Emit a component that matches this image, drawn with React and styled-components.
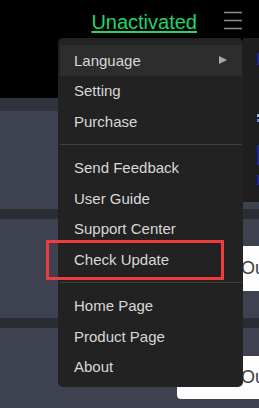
import React from "react";
import styled, { createGlobalStyle } from "styled-components";

const Global = createGlobalStyle`
  html, body { margin: 0; padding: 0; background: #000; }
  body { font-family: "Liberation Sans", Arial, sans-serif; }
  * { box-sizing: border-box; }
`;

const Page = styled.div`
  position: relative;
  width: 259px;
  height: 408px;
  overflow: hidden;
  display: flex;
  flex-direction: column;
  background: #2a2c33;
`;

const Header = styled.header`
  height: 98px;
  flex: none;
  background: #000;
  display: flex;
  justify-content: flex-end;
  align-items: flex-start;
  gap: 27px;
  padding: 10px 17px 0 0;
`;

const ActivationLink = styled.a`
  font-size: 20px;
  line-height: 24px;
  color: #22d46a;
  text-decoration: underline;
  text-underline-offset: 2px;
  cursor: pointer;
`;

const Burger = styled.svg`
  margin-top: 1px;
  flex: none;
`;

const SubBar = styled.div`
  height: 13px;
  flex: none;
  background: #30333d;
`;

const Rows = styled.div`
  display: flex;
  flex-direction: column;
  gap: 10px;
  flex: 1;
`;

const Row = styled.div`
  height: ${(p) => p.$h}px;
  flex: none;
  background: #3d4150;
  display: flex;
  justify-content: flex-end;
  align-items: center;
`;

const WhiteCard = styled.div`
  width: 82px;
  height: ${(p) => p.$h}px;
  background: #fdfdfd;
  border-radius: 4px 0 0 4px;
  display: flex;
  align-items: center;
  padding-left: 64px;
  font-size: 18px;
  color: #404040;
  overflow: hidden;
  white-space: nowrap;
`;

const SidePanel = styled.div`
  position: absolute;
  left: 243px;
  top: 38px;
  width: 16px;
  height: 164px;
  background: #1e1e1e;
`;

const Mark = styled.span`
  position: absolute;
  right: 0;
  width: 2px;
  top: ${(p) => p.$top}px;
  height: ${(p) => p.$h}px;
  background: ${(p) => p.$c};
`;

const Menu = styled.div`
  position: absolute;
  left: 58px;
  top: 38px;
  width: 185px;
  background: #222222;
  border-radius: 5px;
  padding: 7px 1px 5px 2px;
  display: flex;
  flex-direction: column;
`;

const Item = styled.div`
  height: 30.5px;
  display: flex;
  align-items: center;
  justify-content: space-between;
  padding: 0 15px 0 14px;
  font-size: 15px;
  color: #d8d8d8;
  background: ${(p) => (p.$active ? "#2d2d2d" : "transparent")};
  white-space: nowrap;
`;

const Arrow = styled.span`
  width: 0;
  height: 0;
  border-left: 8px solid #a9a9a9;
  border-top: 4.5px solid transparent;
  border-bottom: 4.5px solid transparent;
`;

const Separator = styled.div`
  height: 1px;
  margin: 7.5px 0;
  background: #3e3e3e;
`;

const Highlight = styled.div`
  position: absolute;
  left: 46px;
  top: 240px;
  width: 178px;
  height: 40px;
  border: 3px solid #f03c3c;
  pointer-events: none;
`;

const groups = [
  ["Language", "Setting", "Purchase"],
  ["Send Feedback", "User Guide", "Support Center", "Check Update"],
  ["Home Page", "Product Page", "About"],
];

export default function App() {
  return (
    <>
      <Global />
      <Page>
        <Header>
          <ActivationLink>Unactivated</ActivationLink>
          <Burger width="18" height="20" viewBox="0 0 18 20">
            <line x1="0" y1="1.5" x2="18" y2="1.5" stroke="#8c8c8c" strokeWidth="1.5" />
            <line x1="0" y1="9.5" x2="18" y2="9.5" stroke="#8c8c8c" strokeWidth="1.5" />
            <line x1="0" y1="17.5" x2="18" y2="17.5" stroke="#8c8c8c" strokeWidth="1.5" />
          </Burger>
        </Header>
        <SubBar />
        <Rows>
          <Row $h={98} />
          <Row $h={99}>
            <WhiteCard $h={45}>Output</WhiteCard>
          </Row>
          <Row $h={99}>
            <WhiteCard $h={43}>Output</WhiteCard>
          </Row>
        </Rows>
        <SidePanel>
          <Mark $top={15} $h={12} $c="#23239c" />
          <Mark $top={76} $h={3} $c="#9fb4d8" />
          <Mark $top={81} $h={3} $c="#6f86c0" />
          <Mark $top={107} $h={20} $c="#23239c" />
          <Mark $top={137} $h={10} $c="#23239c" />
        </SidePanel>
        <Menu>
          {groups.map((g, gi) => (
            <React.Fragment key={gi}>
              {gi > 0 && <Separator />}
              {g.map((label) => (
                <Item key={label} $active={label === "Language"}>
                  <span>{label}</span>
                  {label === "Language" && <Arrow />}
                </Item>
              ))}
            </React.Fragment>
          ))}
        </Menu>
        <Highlight />
      </Page>
    </>
  );
}
